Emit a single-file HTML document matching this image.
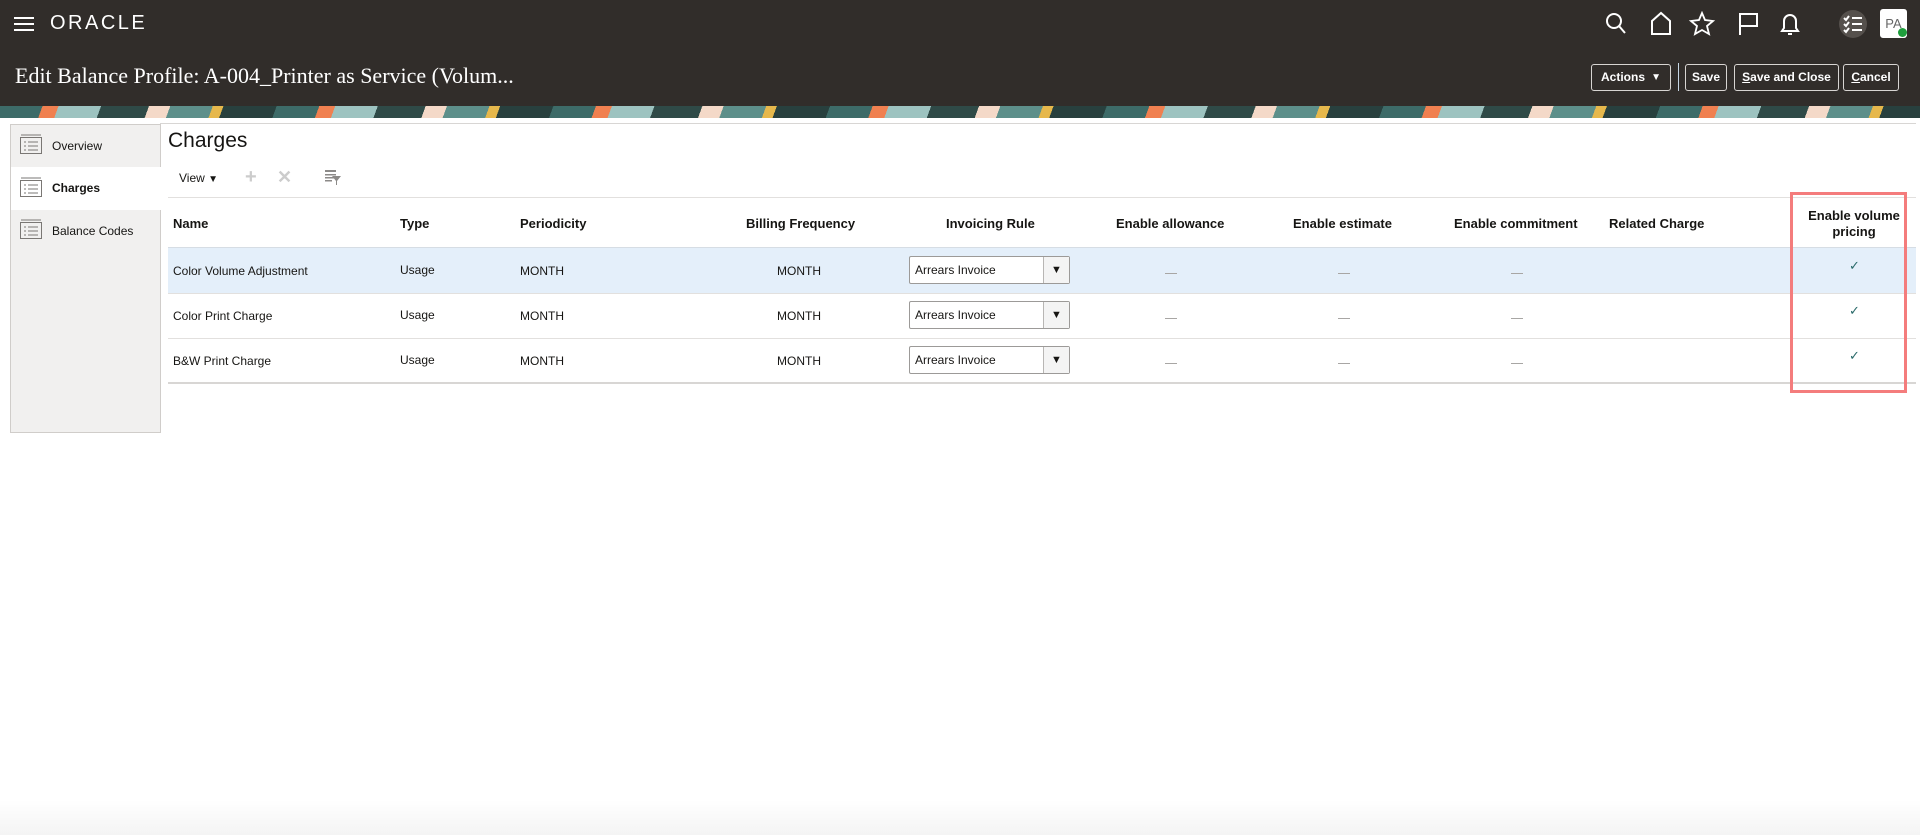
<!DOCTYPE html>
<html><head><meta charset="utf-8"><style>
*{box-sizing:border-box;margin:0;padding:0}
body{width:1920px;height:835px;background:#fff;font-family:"Liberation Sans",sans-serif;color:#161513;position:relative;overflow:hidden}
.hdr{position:absolute;left:0;top:0;width:1920px;height:106px;background:#312d2a}
.banner{position:absolute;left:0;top:106px;width:1920px;height:12px;background:repeating-linear-gradient(110deg,#3d6b68 0 40px,#f08050 40px 55px,#9dc3c0 55px 95px,#2f4a47 95px 140px,#f4d9c8 140px 160px,#5d8f8a 160px 200px,#e6b84c 200px 210px,#28403e 210px 260px)}
.ab{position:absolute;color:#fff}
.btn{position:absolute;top:64px;height:27px;border:1px solid #d8d5d2;border-radius:3px;color:#fff;font-weight:bold;font-size:12px;line-height:25px;text-align:center}
.panel{position:absolute;left:10px;top:124px;width:151px;height:309px;background:#f1f0ef;border:1px solid #d0cdca}
.tab{position:absolute;left:0;width:149px;height:43px;font-size:12px;line-height:43px;padding-left:41px}
.t{position:absolute;font-size:12px}
.th{font-weight:bold;font-size:13px}
.line{position:absolute;left:168px;width:1748px;height:1px;background:#e2e0de}
.sel{position:absolute;left:909px;width:161px;height:28px;border:1px solid #9c9a98;border-radius:2px;background:#fff;font-size:12px;line-height:26px;padding-left:5px}
.sel span{position:absolute;right:0;top:0;width:26px;height:26px;border-left:1px solid #b8b6b4;background:#f4f4f4;text-align:center;font-size:11px}
.dash{position:absolute;width:12px;height:1px;background:#a8a6a4}
.chk{position:absolute;left:1849px;color:#2a6a6a;font-size:13px}
</style></head><body>
<div class="hdr"></div>
<div class="banner"></div>
<svg class="ab" style="left:14px;top:16px" width="20" height="16"><path d="M0 2h20M0 8h20M0 14h20" stroke="#fff" stroke-width="2"/></svg>
<div class="ab" style="left:50px;top:12px;font-size:20px;letter-spacing:2.5px">ORACLE</div>
<div class="ab" style="left:15px;top:63px;font-family:'Liberation Serif',serif;font-size:22px">Edit Balance Profile: A-004_Printer as Service (Volum...</div>
<svg class="ab" style="left:1604px;top:11px" width="210" height="26" fill="none" stroke="#fff" stroke-width="2">
<circle cx="10" cy="10" r="7"/><path d="M15 15l6 7"/>
<path d="M48 23V10l9-8 9 8v13z"/>
<path d="M98 2l3 7 8 1-6 5 2 8-7-4-7 4 2-8-6-5 8-1z" stroke-width="1.8"/>
<path d="M136 24V3h17v12h-17"/>
<path d="M178 20h16l-2-3v-7a6 6 0 0 0-12 0v7zM184 23h4"/>
</svg>
<div style="position:absolute;left:1839px;top:10px;width:28px;height:28px;border-radius:50%;background:#55504c"></div>
<svg class="ab" style="left:1843px;top:14px" width="20" height="20" stroke="#fff" stroke-width="2" fill="none"><path d="M1 4l2 2 3-4M9 4h10M1 10l2 2 3-4M9 10h10M1 16l2 2 3-4M9 16h10"/></svg>
<div style="position:absolute;left:1880px;top:9px;width:27px;height:29px;background:#fff;border-radius:3px;font-size:13px;color:#666;line-height:29px;text-align:center">PA</div>
<div style="position:absolute;left:1898px;top:28px;width:9px;height:9px;border-radius:50%;background:#1e9e3c"></div>
<div class="btn" style="left:1591px;width:80px;text-align:left;padding-left:9px">Actions <span style="position:absolute;right:9px;font-size:10px">▼</span></div>
<div style="position:absolute;left:1678px;top:63px;width:1px;height:28px;background:#c7d7e5"></div>
<div class="btn" style="left:1685px;width:42px">Save</div>
<div class="btn" style="left:1734px;width:105px"><u>S</u>ave and Close</div>
<div class="btn" style="left:1843px;width:56px"><u>C</u>ancel</div>
<div style="position:absolute;left:160px;top:123px;width:1756px;height:1px;background:#d8d6d4"></div>
<div class="panel">
<div class="tab" style="top:0;border-bottom:1px solid #d0cdca">Overview</div>
<div class="tab" style="top:42px;background:#fff;font-weight:bold;width:151px">Charges</div>
<div class="tab" style="top:85px">Balance Codes</div>
</div>
<svg style="position:absolute;left:20px;top:134px" width="22" height="120" fill="none" stroke="#7a7774"><g><rect x=".5" y="3.5" width="21" height="16"/><path d="M1 1h20M4 8h2M8 8h10M4 12h2M8 12h10M4 16h2M8 16h10"/></g><g transform="translate(0,43)"><rect x=".5" y="3.5" width="21" height="16"/><path d="M1 1h20M4 8h2M8 8h10M4 12h2M8 12h10M4 16h2M8 16h10"/></g><g transform="translate(0,85)"><rect x=".5" y="3.5" width="21" height="16"/><path d="M1 1h20M4 8h2M8 8h10M4 12h2M8 12h10M4 16h2M8 16h10"/></g></svg>
<div class="t" style="left:168px;top:129px;font-size:21px">Charges</div>
<div class="t" style="left:179px;top:171px">View <span style="font-size:10px">▼</span></div>
<div class="t" style="left:245px;top:166px;font-size:20px;color:#ccc;font-weight:bold">+</div>
<div class="t" style="left:277px;top:167px;font-size:18px;color:#ccc;font-weight:bold">✕</div>
<svg style="position:absolute;left:325px;top:170px" width="16" height="15" fill="#8c8a88"><rect x="0" y="0" width="11" height="2"/><rect x="0" y="4" width="11" height="1.5"/><rect x="0" y="7" width="9" height="1.5"/><rect x="0" y="10" width="7" height="1.5"/><path d="M7 6h9l-4 5v4h-1v-4z"/></svg>
<div class="line" style="top:197px"></div>
<div class="t th" style="left:173px;top:216px">Name</div>
<div class="t th" style="left:400px;top:216px">Type</div>
<div class="t th" style="left:520px;top:216px">Periodicity</div>
<div class="t th" style="left:746px;top:216px">Billing Frequency</div>
<div class="t th" style="left:946px;top:216px">Invoicing Rule</div>
<div class="t th" style="left:1116px;top:216px">Enable allowance</div>
<div class="t th" style="left:1293px;top:216px">Enable estimate</div>
<div class="t th" style="left:1454px;top:216px">Enable commitment</div>
<div class="t th" style="left:1609px;top:216px">Related Charge</div>
<div class="t th" style="left:1806px;top:208px;text-align:center;width:96px;line-height:16px">Enable volume pricing</div>
<div class="line" style="top:247px;background:#d6dde4"></div>
<div style="position:absolute;left:168px;top:248px;width:1748px;height:45px;background:#e4effa"></div>
<div class="line" style="top:293px"></div>
<div class="line" style="top:338px"></div>
<div class="line" style="top:382px;height:2px;background:#d8d6d4"></div>

<div class="t" style="left:173px;top:264px">Color Volume Adjustment</div>
<div class="t" style="left:173px;top:309px">Color Print Charge</div>
<div class="t" style="left:173px;top:354px">B&amp;W Print Charge</div>
<div class="t" style="left:400px;top:263px">Usage</div><div class="t" style="left:400px;top:308px">Usage</div><div class="t" style="left:400px;top:353px">Usage</div>
<div class="t" style="left:520px;top:264px">MONTH</div><div class="t" style="left:520px;top:309px">MONTH</div><div class="t" style="left:520px;top:354px">MONTH</div>
<div class="t" style="left:777px;top:264px">MONTH</div><div class="t" style="left:777px;top:309px">MONTH</div><div class="t" style="left:777px;top:354px">MONTH</div>
<div class="sel" style="top:256px">Arrears Invoice<span>▼</span></div>
<div class="sel" style="top:301px">Arrears Invoice<span>▼</span></div>
<div class="sel" style="top:346px">Arrears Invoice<span>▼</span></div>
<div class="dash" style="left:1165px;top:273px"></div><div class="dash" style="left:1338px;top:273px"></div><div class="dash" style="left:1511px;top:273px"></div>
<div class="dash" style="left:1165px;top:318px"></div><div class="dash" style="left:1338px;top:318px"></div><div class="dash" style="left:1511px;top:318px"></div>
<div class="dash" style="left:1165px;top:363px"></div><div class="dash" style="left:1338px;top:363px"></div><div class="dash" style="left:1511px;top:363px"></div>
<div class="chk" style="top:258px">✓</div><div class="chk" style="top:303px">✓</div><div class="chk" style="top:348px">✓</div>
<div style="position:absolute;left:1790px;top:192px;width:117px;height:201px;border:3px solid #f47c7c"></div>
<div style="position:absolute;left:0;top:800px;width:1920px;height:35px;background:linear-gradient(#fff,#f4f4f4)"></div>
</body></html>
